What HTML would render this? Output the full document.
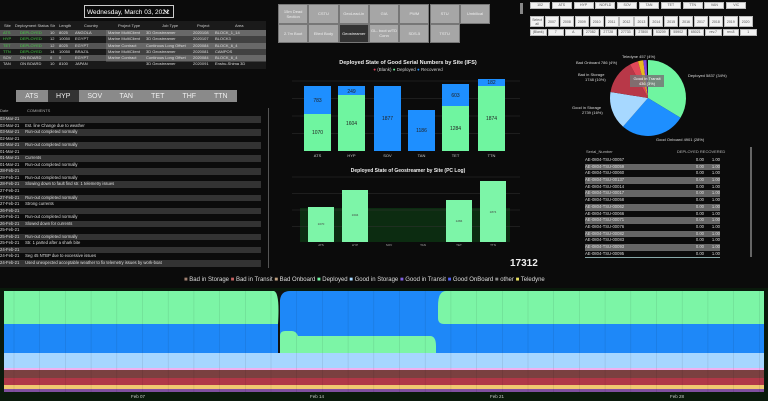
<!DOCTYPE html>
<html><head><meta charset="utf-8"><style>
*{margin:0;padding:0;box-sizing:border-box}
body{width:768px;height:401px;background:#0b0b0b;font-family:"Liberation Sans",sans-serif;color:#ddd;position:relative;overflow:hidden}
.a{position:absolute}
.t{font-size:4px;white-space:nowrap}
.btn{position:absolute;background:#a6a6a6;color:#eee;font-size:4px;display:flex;align-items:center;justify-content:center;text-align:center;border:1px solid #777}
.sl{position:absolute;background:#f2f2f2;border:1px solid #bbb;color:#555;font-size:3.5px;display:flex;align-items:center;justify-content:center;text-align:center}
.tab{position:absolute;top:90px;height:12px;width:31.5px;background:#8a8a8a;color:#eee;font-size:7px;display:flex;align-items:center;justify-content:center}
#cm div{height:6.55px;line-height:6.55px;overflow:hidden}
</style></head><body>

<svg class="a" style="left:84px;top:5px" width="90" height="13" font-family="Liberation Sans">
<rect x="0.5" y="0.5" width="89" height="12" fill="#0b0b0b" stroke="#ccc"/>
<text x="3" y="9" font-size="6.5" fill="#fff">Wednesday, March 03, 2021</text>
<path d="M80,5 L82.5,7.5 L85,5" stroke="#fff" fill="none" stroke-width=".8"/>
</svg>

<!-- top table -->
<div class="a" style="left:0;top:21px;width:266px;height:48px;background:#1a1a1a"></div>
<div class="a t" style="left:4px;top:23px;color:#ccc">Site</div>
<div class="a t" style="left:15px;top:23px;color:#ccc">Deployment Status</div>
<div class="a t" style="left:50px;top:23px;color:#ccc">Str</div>
<div class="a t" style="left:59px;top:23px;color:#ccc">Length</div>
<div class="a t" style="left:84px;top:23px;color:#ccc">Country</div>
<div class="a t" style="left:118px;top:23px;color:#ccc">Project Type</div>
<div class="a t" style="left:162px;top:23px;color:#ccc">Job Type</div>
<div class="a t" style="left:197px;top:23px;color:#ccc">Project</div>
<div class="a t" style="left:235px;top:23px;color:#ccc">Area</div>
<div class="a" style="left:0;top:30px;width:266px;height:38px">
<div style="height:6.3px;background:#555"></div><div style="height:6.3px"></div><div style="height:6.3px;background:#555"></div><div style="height:6.3px"></div><div style="height:6.3px;background:#555"></div>
</div>
<div class="a" style="left:106px;top:30px;width:160px;height:32px;background:rgba(140,140,140,.35)"></div>
<div class="a t" style="left:3px;top:30px;line-height:6.3px;color:#4c4">ATS<br>HYP<br>TET<br>TTN<br><span style="color:#ddd">SOV<br>TAN</span></div>
<div class="a t" style="left:20px;top:30px;line-height:6.3px;color:#4c4">DEPLOYED<br>DEPLOYED<br>DEPLOYED<br>DEPLOYED<br><span style="color:#ddd">ON BOARD<br>ON BOARD</span></div>
<div class="a t" style="left:50px;top:30px;line-height:6.3px">10<br>12<br>12<br>14<br>0<br>10</div>
<div class="a t" style="left:59px;top:30px;line-height:6.3px">8025<br>10050<br>8025<br>10050<br>0<br>8100</div>
<div class="a t" style="left:75px;top:30px;line-height:6.3px">ANGOLA<br>EGYPT<br>EGYPT<br>BRAZIL<br>EGYPT<br>JAPAN</div>
<div class="a t" style="left:108px;top:30px;line-height:6.3px">Marine MultiClient<br>Marine MultiClient<br>Marine Contract<br>Marine MultiClient<br>Marine Contract<br>&nbsp;</div>
<div class="a t" style="left:146px;top:30px;line-height:6.3px">3D Geostreamer<br>3D Geostreamer<br>Continous Long Offset<br>3D Geostreamer<br>Continous Long Offset<br>3D Geostreamer</div>
<div class="a t" style="left:193px;top:30px;line-height:6.3px">2020108<br>2020107<br>2020084<br>2020081<br>2020084<br>2020091</div>
<div class="a t" style="left:215px;top:30px;line-height:6.3px">BLOCK_1_14<br>BLOCK3<br>BLOCK_6_4<br>CAMPOS<br>BLOCK_6_4<br>Enshu-Shima 3D</div>

<!-- tabs -->
<div class="tab" style="left:16px">ATS</div><div class="tab" style="left:47.5px;background:#333">HYP</div><div class="tab" style="left:79px">SOV</div><div class="tab" style="left:110.5px">TAN</div><div class="tab" style="left:142px">TET</div><div class="tab" style="left:173.5px">THF</div><div class="tab" style="left:205px">TTN</div>

<!-- comments -->
<div class="a t" style="left:0;top:108px;color:#aaa">Date</div><div class="a t" style="left:27px;top:108px;color:#aaa">COMMENTS</div>
<div id="cm" class="a" style="left:0;top:116px;width:261px;font-size:4.2px;white-space:nowrap">
<div style="background:#333">03-Mar-21</div><div>03-Mar-21 &nbsp;&nbsp;&nbsp;&nbsp;Est. line Change due to weather</div><div style="background:#333">03-Mar-21 &nbsp;&nbsp;&nbsp;&nbsp;Run-out completed normally</div><div>02-Mar-21</div><div style="background:#333">02-Mar-21 &nbsp;&nbsp;&nbsp;&nbsp;Run-out completed normally</div><div>01-Mar-21</div><div style="background:#333">01-Mar-21 &nbsp;&nbsp;&nbsp;&nbsp;Currents</div><div>01-Mar-21 &nbsp;&nbsp;&nbsp;&nbsp;Run-out completed normally</div><div style="background:#333">28-Feb-21</div><div>28-Feb-21 &nbsp;&nbsp;&nbsp;&nbsp;Run-out completed normally</div><div style="background:#333">28-Feb-21 &nbsp;&nbsp;&nbsp;&nbsp;Slowing down to fault find str. 1 telemetry issues</div><div>27-Feb-21</div><div style="background:#333">27-Feb-21 &nbsp;&nbsp;&nbsp;&nbsp;Run-out completed normally</div><div>27-Feb-21 &nbsp;&nbsp;&nbsp;&nbsp;Strong currents</div><div style="background:#333">26-Feb-21</div><div>26-Feb-21 &nbsp;&nbsp;&nbsp;&nbsp;Run-out completed normally</div><div style="background:#333">26-Feb-21 &nbsp;&nbsp;&nbsp;&nbsp;Slowed down for currents</div><div>25-Feb-21</div><div style="background:#333">25-Feb-21 &nbsp;&nbsp;&nbsp;&nbsp;Run-out completed normally</div><div>25-Feb-21 &nbsp;&nbsp;&nbsp;&nbsp;Str. 1 parted after a shark bite</div><div style="background:#333">24-Feb-21</div><div>24-Feb-21 &nbsp;&nbsp;&nbsp;&nbsp;Seg 45 NTBP due to excessive issues</div><div style="background:#333">24-Feb-21 &nbsp;&nbsp;&nbsp;&nbsp;Used unexpected acceptable weather to fix telemetry issues by work-boat</div>
</div>
<div class="a" style="left:268px;top:108px;width:1px;height:160px;background:#555"></div>

<!-- button grid -->
<div class="btn" style="left:278px;top:4px;width:30.3px;height:19.5px">15m Dead Section</div>
<div class="btn" style="left:308.3px;top:4px;width:30.3px;height:19.5px">CSTU</div>
<div class="btn" style="left:338.6px;top:4px;width:30.3px;height:19.5px">GeoLead-in</div>
<div class="btn" style="left:368.9px;top:4px;width:30.3px;height:19.5px">GIA</div>
<div class="btn" style="left:399.2px;top:4px;width:30.3px;height:19.5px">PWM</div>
<div class="btn" style="left:429.5px;top:4px;width:30.3px;height:19.5px">STU</div>
<div class="btn" style="left:459.8px;top:4px;width:30.3px;height:19.5px">Umbilical</div>
<div class="btn" style="left:278px;top:23.5px;width:30.3px;height:19.5px">2.7m Boot</div>
<div class="btn" style="left:308.3px;top:23.5px;width:30.3px;height:19.5px">Elted Body</div>
<div class="btn" style="left:338.6px;top:23.5px;width:30.3px;height:19.5px;background:#333">Geostreamer</div>
<div class="btn" style="left:368.9px;top:23.5px;width:30.3px;height:19.5px">GL- boot w/TD Conn</div>
<div class="btn" style="left:399.2px;top:23.5px;width:30.3px;height:19.5px">SDS-5</div>
<div class="btn" style="left:429.5px;top:23.5px;width:30.3px;height:19.5px">TSTU</div>

<!-- slicers -->
<div class="a" style="left:520px;top:3px;width:3px;height:11px;background:#888"></div>
<div id="s1"></div>
<script>
(function(){
var r1=["102","ATS","HYP","NOFLD","SOV","TAN","TET","TTN","VAN","VIC"],
r2=["Select all","2007","2008","2009","2010","2011","2012","2013","2014","2015","2016","2017","2018","2019","2020"],
r3=["(Blank)","7","A","27082","27728","27733","27800","53209","55902","65021","rev.7","rev.8","1"];
var h="";
r1.forEach(function(s,i){h+='<div class="sl" style="left:'+(530+i*21.8)+'px;top:2px;width:20px;height:6.5px">'+s+'</div>'});
r2.forEach(function(s,i){h+='<div class="sl" style="left:'+(530+i*14.9)+'px;top:16px;width:14.2px;height:11px">'+s+'</div>'});
r3.forEach(function(s,i){h+='<div class="sl" style="left:'+(530+i*17.5)+'px;top:29px;width:16.5px;height:6.5px">'+s+'</div>'});
document.getElementById("s1").innerHTML=h;
})();
</script>

<!-- bar charts -->
<svg class="a" style="left:270px;top:50px" width="290" height="220" font-family="Liberation Sans">
<text x="138" y="14" fill="#eee" font-size="5.5" text-anchor="middle" font-weight="bold">Deployed State of Good Serial Numbers by Site (IFS)</text>
<text x="138" y="21" fill="#ccc" font-size="4.5" text-anchor="middle"><tspan fill="#e0405a">●</tspan> (Blank) <tspan fill="#6ff5a0">●</tspan> Deployed <tspan fill="#1e90ff">●</tspan> Recovered</text>
<g stroke="#333" stroke-width=".5"><line x1="22" y1="31" x2="250" y2="31"/><line x1="22" y1="48.5" x2="250" y2="48.5"/><line x1="22" y1="66" x2="250" y2="66"/><line x1="22" y1="83.5" x2="250" y2="83.5"/></g>
<g fill="#6ff5a0"><rect x="34" y="64" width="27" height="37"/><rect x="68" y="45" width="27" height="56"/><rect x="172" y="56" width="27" height="45"/><rect x="208" y="36" width="27" height="65"/></g>
<g fill="#1e8fff"><rect x="34" y="36" width="27" height="28"/><rect x="68" y="36" width="27" height="9"/><rect x="104" y="36" width="27" height="65"/><rect x="138" y="60" width="27" height="41"/><rect x="172" y="34" width="27" height="22"/><rect x="208" y="29" width="27" height="7"/></g>
<g font-size="5" fill="#222" text-anchor="middle"><text x="47.5" y="84">1070</text><text x="47.5" y="52">783</text><text x="81.5" y="75">1604</text><text x="81.5" y="43">249</text><text x="117.5" y="70">1877</text><text x="151.5" y="82">1186</text><text x="185.5" y="80">1284</text><text x="185.5" y="47">603</text><text x="221.5" y="70">1874</text><text x="221.5" y="34">182</text></g>
<g font-size="4" fill="#ccc" text-anchor="middle"><text x="47.5" y="107">ATS</text><text x="81.5" y="107">HYP</text><text x="117.5" y="107">SOV</text><text x="151.5" y="107">TAN</text><text x="185.5" y="107">TET</text><text x="221.5" y="107">TTN</text></g>
<text x="138" y="122" fill="#eee" font-size="5" text-anchor="middle" font-weight="bold">Deployed State of Geostreamer by Site (PC Log)</text>
<rect x="30" y="158" width="210" height="34" fill="#0d3a14" opacity=".7"/>
<g stroke="#333" stroke-width=".5"><line x1="22" y1="127" x2="250" y2="127"/><line x1="22" y1="143.5" x2="250" y2="143.5"/><line x1="22" y1="160" x2="250" y2="160"/><line x1="22" y1="176.5" x2="250" y2="176.5"/></g>
<g fill="#7df5a8"><rect x="38" y="157" width="26" height="35"/><rect x="72" y="140" width="26" height="52"/><rect x="176" y="150" width="26" height="42"/><rect x="210" y="131" width="26" height="61"/></g>
<g font-size="3" fill="#444" text-anchor="middle"><text x="51" y="175">1070</text><text x="85" y="166">1604</text><text x="189" y="172">1284</text><text x="223" y="163">1874</text></g>
<g font-size="3" fill="#aaa" text-anchor="middle"><text x="51" y="196">ATS</text><text x="85" y="196">HYP</text><text x="119" y="196">SOV</text><text x="153" y="196">TAN</text><text x="189" y="196">TET</text><text x="223" y="196">TTN</text></g>
<text x="240" y="216" fill="#eee" font-size="10" font-weight="bold">17312</text>
</svg>

<!-- pie -->
<svg class="a" style="left:550px;top:50px" width="218" height="100" font-family="Liberation Sans">
<g transform="translate(98,48)">
<path d="M0,0 L0,-38 A38,38 0 0,1 32.5,19.7 Z" fill="#6ff5a0"/>
<path d="M0,0 L32.5,19.7 A38,38 0 0,1 -25,28.6 Z" fill="#1e8fff"/>
<path d="M0,0 L-25,28.6 A38,38 0 0,1 -37.5,-6 Z" fill="#a7d8ff"/>
<path d="M0,0 L-37.5,-6 A38,38 0 0,1 -18,-33.5 Z" fill="#b83848"/>
<path d="M0,0 L-18,-33.5 A38,38 0 0,1 -10,-36.7 Z" fill="#e04858"/>
<path d="M0,0 L-10,-36.7 A38,38 0 0,1 -4.8,-37.7 Z" fill="#e8b820"/>
<path d="M0,0 L-4.8,-37.7 A38,38 0 0,1 -1.5,-38 Z" fill="#8040e0"/>
<rect x="-18" y="-23" width="34" height="12" fill="#777" opacity=".85"/>
<text x="-1" y="-18" font-size="4" fill="#fff" text-anchor="middle">Good in Transit</text><text x="-1" y="-13" font-size="4" fill="#fff" text-anchor="middle">436 (3%)</text>
</g>
<g font-size="4" fill="#ddd"><text x="72" y="8">Teledyne 457 (4%)</text><text x="26" y="14">Bad Onboard 786 (4%)</text><text x="28" y="26">Bad in Storage</text><text x="35" y="31">1748 (10%)</text><text x="22" y="59">Good in Storage</text><text x="32" y="64">2739 (16%)</text><text x="138" y="27">Deployed 5837 (34%)</text><text x="106" y="91">Good Onboard 4901 (28%)</text></g>
</svg>

<!-- serial table -->
<div class="a t" style="left:586px;top:149px;color:#bbb">Serial_Number</div>
<div class="a t" style="left:677px;top:149px;color:#bbb">DEPLOYED RECOVERED</div>
<div class="a" style="left:750px;top:147px;width:1.5px;height:110px;background:#666"></div>
<div id="st" class="a" style="left:585px;top:157px;width:135px;font-size:4.2px;line-height:6.7px"></div>
<script>
(function(){var n=["00057","00059","00060","00137","00014","00017","00058","00062","00066","00071","00076","00082","00083","00093","00095"],h="";
n.forEach(function(s,i){h+='<div style="display:flex;height:6.7px;'+(i%2?'background:#666;':'')+'"><span style="flex:1">AE-0804-TSU-'+s+'</span><span style="width:25px;text-align:right">0.00</span><span style="width:16px;text-align:right">1.00</span></div>'});
h+='<div style="border-top:1px solid #8aa;height:5px"></div>';document.getElementById("st").innerHTML=h;})();
</script>

<!-- legend -->
<div class="a" style="left:184px;top:277px;font-size:6px;color:#ddd;white-space:nowrap"><span style="color:#a08070">■</span> Bad in Storage <span style="color:#c06060">■</span> Bad in Transit <span style="color:#c0a080">■</span> Bad Onboard <span style="color:#6ff5a0">■</span> Deployed <span style="color:#a7d8ff">■</span> Good in Storage <span style="color:#8060e0">■</span> Good in Transit <span style="color:#5060f0">■</span> Good OnBoard <span style="color:#888">■</span> other <span style="color:#e8e060">■</span> Teledyne</div>

<!-- stream -->
<div class="a" style="left:0;top:288px;width:768px;height:113px;background:#0a1a0c"></div>
<svg class="a" style="left:0;top:288px" width="768" height="113" font-family="Liberation Sans">
<rect x="4" y="3" width="760" height="101" fill="#111"/>
<path d="M4,3 H274 Q280,5 278,36 V65 H4 Z" fill="#7cf5a6"/>
<path d="M4,36 H278 V65 H4 Z" fill="#1e88f8"/>
<path d="M280,12 Q281,3 290,3 H640 Q646,3 646,20 V65 H280 Z" fill="#1e88f8"/>
<path d="M280,48 Q280,43 285,43 H292 Q296,43 298,48 H430 Q436,48 436,58 V65 H280 Z" fill="#7cf5a6"/>
<path d="M438,18 Q438,3 446,3 H764 V36 H444 Q438,36 438,30 Z" fill="#7cf5a6"/>
<path d="M436,36 H764 V65 H436 Z" fill="#1e88f8"/>
<rect x="4" y="65" width="760" height="15" fill="#a6d6ff"/>
<rect x="4" y="80" width="760" height="2" fill="#f0b0f0"/>
<rect x="4" y="82" width="760" height="8" fill="#7a4040"/>
<rect x="4" y="90" width="760" height="7" fill="#b03848"/>
<rect x="4" y="97" width="760" height="4" fill="#f0c870"/>
<rect x="4" y="101" width="760" height="3" fill="#8050a0"/>
<g stroke="#000" stroke-opacity=".12" stroke-width=".6" id="vl"></g>
<g font-size="4.5" fill="#ccc" text-anchor="middle"><text x="138" y="110">Feb 07</text><text x="317" y="110">Feb 14</text><text x="497" y="110">Feb 21</text><text x="677" y="110">Feb 28</text></g>
</svg>
<script>
(function(){var g=document.getElementById("vl"),h="";for(var x=14;x<764;x+=25.7){h+='<line x1="'+x+'" y1="3" x2="'+x+'" y2="104"/>'}g.innerHTML=h;})();
</script>
</body></html>
